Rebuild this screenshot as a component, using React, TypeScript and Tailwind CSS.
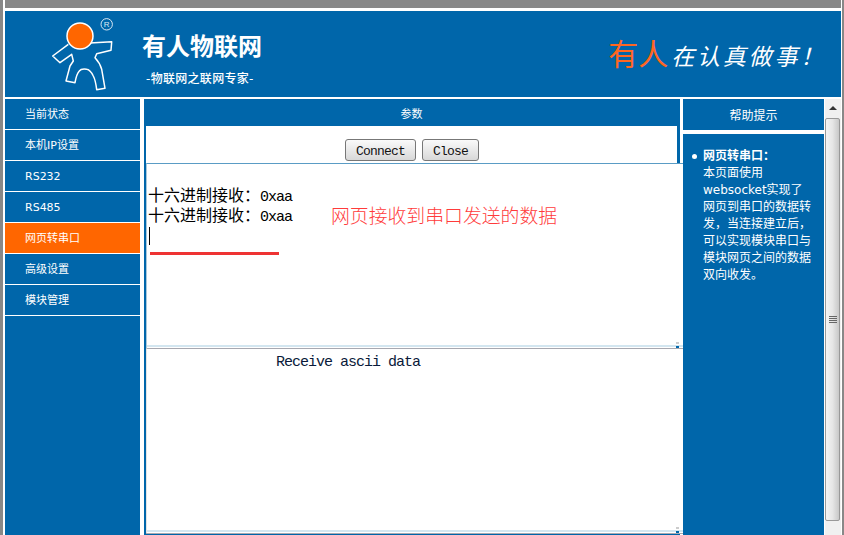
import React from "react";

const navItems = ["当前状态", "本机IP设置", "RS232", "RS485", "网页转串口", "高级设置", "模块管理"];

function Logo() {
  return (
    <svg width="90" height="85" viewBox="0 0 90 85" className="shrink-0">
      <path
        d="M50 32 L71.7 30.7 L71 39.3 L56.7 42.7 L55 46.7 Q60 52 61.7 58.3 L65 77.3 L56.7 78.7 Q55.5 69 53.3 65 Q50 58.5 46.7 58.3 Q41 57.5 39.3 60 Q36.5 63 35 71.7 L26 70 L30 55 L33.3 50 L31.7 43.3 L20 51.7 L12.7 45 L28.3 33.3"
        fill="none"
        stroke="#fff"
        strokeWidth="1.5"
        strokeLinejoin="round"
      />
      <circle cx="40" cy="25" r="13" fill="#ff6600" stroke="#fff" strokeWidth="1.5" />
      <circle cx="66.7" cy="13.3" r="5.7" fill="none" stroke="#dbe8f4" strokeWidth="1" />
      <text x="66.7" y="16.3" textAnchor="middle" fontSize="8" fill="#dbe8f4" fontFamily="Liberation Sans">
        R
      </text>
    </svg>
  );
}

function Header() {
  return (
    <div className="mt-[3px] h-[86px] bg-[#0066aa] flex items-center text-white">
      <div className="ml-[35px] mt-[-1px]">
        <Logo />
      </div>
      <div className="ml-[12px] flex flex-col items-start mt-[12px]">
        <div className="text-[24px] leading-[30px] font-bold mt-[-2px]">有人物联网</div>
        <div className="text-[12px] leading-[16px] font-medium tracking-[0.3px] ml-[4px] mt-[9px]">-物联网之联网专家-</div>
      </div>
      <div className="ml-auto mr-[15px] mt-[4px] flex items-baseline">
        <span className="text-[30px] leading-[36px] font-normal text-[#ff6622]">有人</span>
        <span className="ml-[3px] text-[23px] leading-[36px] italic font-normal tracking-[2.8px]">在认真做事{"\uFF01"}</span>
      </div>
    </div>
  );
}

function Nav() {
  return (
    <div className="w-[135px] shrink-0 bg-[#0066aa] text-white text-[11px]">
      {navItems.map((item) => (
        <div
          key={item}
          className={`h-[31px] pl-[20px] pt-[2px] flex items-center border-b border-white ${
            item === "网页转串口" ? "bg-[#ff6600]" : ""
          }`}
        >
          {item}
        </div>
      ))}
    </div>
  );
}

function BoxEdge() {
  return (
    <>
      <div className="absolute left-0 right-0 bottom-[1px] h-[2px] bg-[#d3e6f0]" />
      <div className="absolute right-[4px] bottom-0 w-[3px] h-[2px] bg-[#0066aa]" />
      <div className="absolute right-[4px] bottom-[4px] w-[3px] h-[2px] bg-[#cccccc]" />
    </>
  );
}

function Center() {
  return (
    <div className="relative w-[536px] ml-[4px] shrink-0 bg-[#0066aa]">
      <div className="h-[27px] pt-[5px] flex items-center justify-center text-white text-[11px] pr-[1px]">参数</div>
      <div className="ml-[2px] mr-[3px] h-[37px] bg-white flex items-start justify-center gap-[6px] pt-[13px] pl-[1px]">
        <Btn label="Connect" className="w-[71px]" />
        <Btn label="Close" className="w-[57px]" />
      </div>
      <div className="ml-[2px] w-[537px] bg-white text-black">
        <div className="h-[185px] border-t border-l border-t-[#5a9cc5] border-l-[#a9c8dc] pl-[1px] pt-[22px] text-[16px] leading-[20px] relative">
          <Row />
          <Row />
          <div className="w-px h-[18px] bg-black mt-[1px] ml-[1px]" />
          <BoxEdge />
        </div>
        <div className="h-[185px] border-t border-l border-t-[#a8a8b0] border-l-[#e4e4e4] pl-[129px] pt-[3px] text-[15px] tracking-[-1px] leading-[22px] text-[#0a1a3a] font-['Liberation_Mono',monospace] relative">
          Receive ascii data
          <BoxEdge />
        </div>
        <div className="h-px bg-[#a8a8b0]" />
      </div>
      {/* red note drawn on top of the receive box */}
      <div className="absolute left-[187px] top-[105px] text-[18.85px] leading-[26px] font-light text-[#ff3b3b] whitespace-nowrap">
        网页接收到串口发送的数据
      </div>
      <div className="absolute left-[6px] top-[153px] w-[129px] h-[3px] bg-[#ee3333]" />
    </div>
  );
}

function Row() {
  return (
    <div className="h-[20px] whitespace-nowrap">
      十六进制接收{"\uFF1A"}<span className="font-['Liberation_Mono',monospace] text-[15px] tracking-[-1px]">0xaa</span>
    </div>
  );
}

function Btn({ label, className }: { label: string; className: string }) {
  return (
    <button
      className={`h-[22px] pt-[2px] rounded-[3px] border border-[#777] bg-gradient-to-b from-[#fafafa] to-[#d8d8d8] text-[13px] tracking-[-0.8px] text-[#111] font-['Liberation_Mono',monospace] ${className}`}
    >
      {label}
    </button>
  );
}

function Help() {
  return (
    <div className="w-[141px] ml-[3px] shrink-0 flex flex-col gap-[4px] text-white">
      <div className="h-[31px] pt-[2px] bg-[#0066aa] flex items-center justify-center text-[12px]">帮助提示</div>
      <div className="flex-1 bg-[#0066aa] pt-[14px] pl-[9px] flex items-start gap-[6px]">
        <div className="w-[5px] h-[5px] mt-[6px] rounded-full bg-white shrink-0" />
        <div className="w-[109px] text-[12px] leading-[17px]">
          <b>网页转串口{"\uFF1A"}</b>
          <br />
          本页面使用websocket实现了网页到串口的数据转发{"\uFF0C"}当连接建立后{"\uFF0C"}可以实现模块串口与模块网页之间的数据双向收发{"\u3002"}
        </div>
      </div>
    </div>
  );
}

function Scrollbar() {
  return (
    <div className="w-[16px] ml-[1px] shrink-0 bg-[#f0f0f0] flex flex-col">
      <div className="h-[19px] pb-[2px] flex items-center justify-center">
        <div className="w-0 h-0 border-x-[4px] border-x-transparent border-b-[4px] border-b-[#333]" />
      </div>
      <div className="w-[15px] h-[403px] rounded-[2px] border border-[#999] bg-gradient-to-r from-[#f4f4f4] via-[#e6e6e6] to-[#c8c8c8] flex items-center justify-center">
        <div className="w-[8px] flex flex-col gap-[1px]">
          <div className="h-px bg-[#666]" />
          <div className="h-px bg-[#666]" />
          <div className="h-px bg-[#666]" />
          <div className="h-px bg-[#666]" />
        </div>
      </div>
    </div>
  );
}

export default function App() {
  return (
    <div className="w-[844px] h-[535px] overflow-hidden bg-white pl-[5px] relative font-['DejaVu_Sans','Noto_Sans_CJK_SC',sans-serif]">
      <div className="absolute left-0 top-0 bottom-0 w-[3px] bg-[#888]" />
      <div className="absolute right-0 top-0 bottom-0 w-[2px] bg-[#888]" />
      <div className="w-[836px] h-[8px] bg-[#888]" />
      <div className="w-[836px]">
        <Header />
      </div>
      <div className="flex h-[436px] mt-[2px]">
        <Nav />
        <Center />
        <Help />
        <Scrollbar />
      </div>
    </div>
  );
}
